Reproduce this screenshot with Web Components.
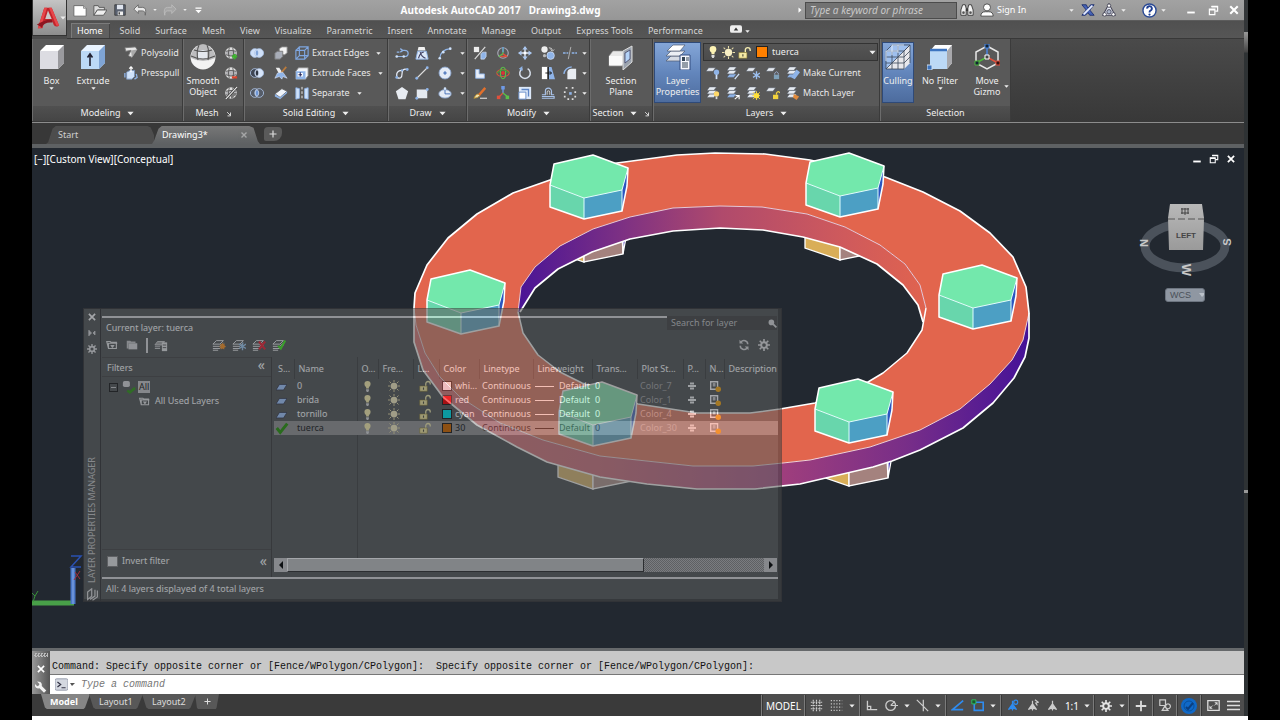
<!DOCTYPE html>
<html lang="en">
<head>
<meta charset="utf-8">
<title>Autodesk AutoCAD 2017 - Drawing3.dwg</title>
<style>
  html { background: #000; }
  body { margin: 0; font: 9px/12px "Noto Sans", "Open Sans", sans-serif; color: #e8e8e8; }
</style>
</head>
<body>
<cad-app></cad-app>
<script>
const define = (name, html, setup) => customElements.define(name, class extends HTMLElement {
  connectedCallback() {
    if (this.shadowRoot) return;
    const t = document.createElement('template');
    t.innerHTML = typeof html === 'function' ? html(this) : html;
    this.attachShadow({ mode: 'open' }).append(t.content.cloneNode(true));
    if (setup) setup(this);
  }
});

/* ---------- icon set ---------- */
const B = '#8fb4e8', L = '#cfe2fa', W = '#f2f2f2', G = '#d0d0d0';
const sheet = (x, y, c = '#e6ebf2') => `<path d="M${x + 3} ${y}h8l-3 4h-8z" fill="${c}" stroke="#4c5560" stroke-width=".6"/>`;
const stack = (c2 = '#e6ebf2') => sheet(1, 9, c2) + sheet(1, 5) + sheet(1, 1);
const ball = `<circle cx="8" cy="8" r="6.600" fill="#e2e2e2"/><path d="M2 6q6-2 12 0v4q-6 3-12 0z" fill="#b4b4b8"/><path d="M2 6q6-2 12 0M2 10q6 3 12 0M6 2q-2 6 0 12M10 2q2 6 0 12" fill="none" stroke="#555" stroke-width="1"/>`;
const folder = `<path d="M2 4h4l1 1h6v7H4zM4 12V6h10" fill="none" stroke="#e8e8e8" stroke-width="1.300"/>`;
const rings = (a, b, mid) => `<circle cx="5.500" cy="8" r="5" fill="${a}" stroke="#a9bfe0"/><circle cx="10.500" cy="8" r="5" fill="${b}" stroke="#a9bfe0"/><path d="M8 4a5 5 0 0 1 0 8a5 5 0 0 1 0-8z" fill="${mid}" stroke="#dce8fa" stroke-width=".8"/>`;
const person = c => `<path d="M8 2v4l5 7-4-2-1 2-1-2-4 2 5-7z" fill="${c}" stroke="${c}" stroke-width="1.500"/>`;
const lstack = `<path d="M5 3h8l-4 4H1zM1 9.500h8l4-4M1 12h8l4-4M1 14h6" fill="none" stroke="#eee" stroke-width="1.100"/>`;
const ICONS = {
  caret: `<path d="M1 4h14l-7 8z" fill="#eee"/>`,
  tri: `<path d="M4 1l8 7-8 7z" fill="#fff"/>`,
  new: `<path d="M1 3h11l3 3v9H1z" fill="#fff" stroke="#666"/><path d="M12 3v3h3" fill="#ccc" stroke="#888"/>`,
  open: `<path d="M1 14V3h5l1 2h6v3H5z" fill="#ddd" stroke="#555"/><path d="M5 8h11l-4 6H1z" fill="#eee" stroke="#555"/>`,
  save: `<path d="M1 1h14v14H1z" fill="#5b6270" stroke="#333"/><path d="M4 1h8v6H4z" fill="#dfe4ee"/><path d="M5 10h7v5H5z" fill="#eee"/><path d="M6 11h2v3H6z" fill="#444"/>`,
  undo: `<path d="M6 2L1 7l5 5V9h5q3 0 3 5 2-9-3-9H6z" fill="#e8e8e8" stroke="#666"/>`,
  redo: `<path d="M10 2l5 5-5 5V9H5q-3 0-3 5-2-9 3-9h5z" fill="#a6a6a6" stroke="#bbb"/>`,
  qmenu: `<path d="M1 1h14v3H1zM1 7h14l-7 7z" fill="#fff"/>`,
  binoc: `<path d="M3 2h3l1 4v8H1V8zM13 2h-3L9 6v8h6V8z" fill="#f4f4f4" stroke="#333"/><path d="M7 6h2v3H7z" fill="#333"/><circle cx="4" cy="11" r="1.500" fill="#555"/><circle cx="12" cy="11" r="1.500" fill="#555"/>`,
  user: `<circle cx="8" cy="5" r="4" fill="#fff" stroke="#444"/><path d="M1 15q0-5 5-5h4q5 0 5 5z" fill="#fff" stroke="#444"/>`,
  exchange: `<path d="M1 2h5l2 4 3-4h4l-5 6 5 6h-5l-2-3-3 3H1l5-6z" fill="#4663b8" stroke="#1e2f6c"/><path d="M3 13l10-10" stroke="#e8eeff" stroke-width="2"/>`,
  a360: `<path d="M8 1l7 13H1z" fill="#e8ecf8" stroke="#445" stroke-width="1.200"/><circle cx="8" cy="10" r="2.500" fill="#a9b3c8" stroke="#445"/><circle cx="8" cy="3" r="2" fill="#fff" stroke="#445"/><circle cx="3" cy="13" r="2" fill="#fff" stroke="#445"/><circle cx="13" cy="13" r="2" fill="#fff" stroke="#445"/>`,
  help: `<circle cx="8" cy="8" r="7" fill="#fff" stroke="#2b4a94" stroke-width="1.500"/><path d="M5.500 6a2.500 2.500 0 1 1 3.500 2.200q-1 .5-1 1.800" fill="none" stroke="#1f3f94" stroke-width="2"/><circle cx="8" cy="12.300" r="1.200" fill="#1f3f94"/>`,
  min: `<path d="M2 12h12" stroke="#fff" stroke-width="3"/>`,
  restore: `<path d="M5 2h9v7h-3M2 6h8v8H2z" fill="none" stroke="#fff" stroke-width="1.700"/><path d="M5 2.500h9M2 7h8" stroke="#fff" stroke-width="2.200"/>`,
  close: `<path d="M3 3l10 10M13 3L3 13" stroke="#fff" stroke-width="2.800"/>`,
  polysolid: `<path d="M1 2l12-1 2 3-6 9-4-2 3-6-6 1z" fill="#e6e6e6" stroke="#777"/><path d="M8 5l7-1-6 9z" fill="#a8a8a8"/>`,
  presspull: `<path d="M3 7l4-2h5v7l-3 3H3z" fill="${L}" stroke="#7793bd"/><path d="M8 1v6M6 3l2-2 2 2" stroke="#fff" stroke-width="1.500" fill="none"/><path d="M1 8v5M14 9l1 4-3 2" stroke="${B}" fill="none" stroke-width="1.500"/>`,
  meshmore: ball + `<path d="M12 9v6M9 12h6" stroke="#3cb52e" stroke-width="2.500"/>`,
  meshless: ball + `<path d="M9 13h6" stroke="#e0442c" stroke-width="2.500"/>`,
  meshcrease: ball + `<path d="M8 8h7L8 15z" fill="#777"/><path d="M2 15L15 1" stroke="#333" stroke-width="2.600"/><path d="M2 15L15 1" stroke="#eee" stroke-width="1.300"/>`,
  union: rings('#cfe0f8', '#cfe0f8', '#7fa3d8'),
  subtract: rings('#3f4654', '#d7e5fa', '#2d3442'),
  intersect: rings('#555c68', '#555c68', '#6c95d6'),
  box2: `<path d="M6 3l3-2h6v7l-3 2H6z" fill="#f4f4f4" stroke="#888"/><path d="M1 8l3-2h6v6l-3 3H1z" fill="#a8adb8" stroke="#777"/>`,
  broom: `<path d="M2 2h4l4 6-3 3z" fill="#eee"/><path d="M14 1L8 8" stroke="#b97a3c" stroke-width="2"/><path d="M4 8l6-1 5 7-5-2-1 3-3-3-5 2z" fill="${B}" stroke="#e8f0ff" stroke-width=".6"/>`,
  shell: `<path d="M1 9l8-6 6 3-8 7z" fill="#f0f4fa" stroke="#666"/><path d="M1 9v3l6 3v-2zM7 15l8-7V6l-8 7z" fill="${B}"/>`,
  cage: `<path d="M1 5h10v10H1zM5 1h10v10H5zM1 5l4-4M11 5l4-4M11 15l4-4M1 15l4-4" fill="none" stroke="#7ea6e0" stroke-width="1.300"/>`,
  extface: `<path d="M1 6l3-4h11v9l-3 4H1z" fill="#f2f5fa" stroke="#888"/><path d="M1 6h11v9H1z" fill="${B}"/><path d="M3 8h6v4H3z" fill="#fff"/><path d="M6 7v5M4 10h4" stroke="#225" stroke-width="1.200"/>`,
  separate: `<path d="M1 2l4 1v11l-4 1zM15 2l-4 1v11l4 1z" fill="${L}" stroke="${B}"/><path d="M8 1v14" stroke="#fff" stroke-dasharray="3 2"/>`,
  pline: `<path d="M2 12h9q4 0 4-3.500T11 5H7M2 7h3M6 3l3 2-3 2" fill="none" stroke="${B}" stroke-width="1.400"/><circle cx="2" cy="12" r="1.500" fill="${L}"/><circle cx="10" cy="12" r="1.500" fill="${L}"/>`,
  loft: `<path d="M4 1h7l1 4H3z" fill="#f2f2f2"/><path d="M3 6h10l2 9H1z" fill="#dce8f8" stroke="${B}"/><path d="M4 14q2-7 6-7M6 7q1 5 6 7" fill="none" stroke="#446" stroke-width="1.300"/>`,
  arc: `<path d="M2 14Q3 4 14 3" fill="none" stroke="${B}" stroke-width="1.400"/><circle cx="2" cy="14" r="1.500" fill="${L}"/><circle cx="6" cy="7" r="1.500" fill="${L}"/><circle cx="14" cy="3" r="1.500" fill="${L}"/>`,
  spline: `<path d="M2 13q6 3 6-4t6-5M2 13V9q1-4 6-4" fill="none" stroke="#e8eefa" stroke-width="1.400"/><circle cx="2" cy="13" r="1.600" fill="${B}"/><circle cx="14" cy="4" r="1.600" fill="${B}"/><circle cx="8" cy="5" r="1.300" fill="${B}"/>`,
  line: `<path d="M2 14L14 2" stroke="#ddd" stroke-width="1.300"/><circle cx="2" cy="14" r="1.600" fill="${B}"/><circle cx="14" cy="2" r="1.600" fill="${B}"/>`,
  circle: `<circle cx="8" cy="8" r="6.800" fill="#e4ebf6" stroke="#8ea9d4"/><path d="M8 6v4M6 8h4" stroke="#3a67b5" stroke-width="1.300"/>`,
  polygon: `<path d="M8 1l7 5-3 9H4L1 6z" fill="#e8ecf2"/>`,
  rect: `<path d="M2 4h12v10H2z" fill="#e4e9f0"/><circle cx="2" cy="14" r="1.600" fill="${B}"/><circle cx="14" cy="4" r="1.600" fill="${B}"/>`,
  ellipse: `<ellipse cx="8" cy="9" rx="7" ry="4.800" fill="#e4ebf6" stroke="#8ea9d4"/><path d="M8 3v6h6" stroke="#3a67b5" fill="none"/><circle cx="8" cy="3" r="1.500" fill="${L}"/>`,
  smesh: `<path d="M1 1h6v6H1z" fill="#eee"/><path d="M2 15L14 1" stroke="#ddd" stroke-width="1.300"/><path d="M9 9l2-2h4v5l-2 3H9z" fill="${B}" stroke="#dce8fa" stroke-width=".7"/>`,
  gizrot: `<circle cx="8" cy="8" r="6" fill="none" stroke="#a8a8b8" stroke-width="1.300"/><path d="M8 2v7l-5 3" fill="none" stroke="#5ac04a" stroke-width="1.500"/><path d="M8 9l5 3M5 12h7" stroke="#e0503c" stroke-width="1.500"/><path d="M8 1v6" stroke="#6f9ae6" stroke-width="1.500"/>`,
  move: `<path d="M8 1v14M1 8h14" stroke="#dce6f6" stroke-width="1.600"/><path d="M8 0l3 4H5zM8 16l3-4H5zM0 8l4-3v6zM16 8l-4-3v6z" fill="#a9c6f0"/><path d="M6.500 6.500h3v3h-3z" fill="#fff"/>`,
  copy: `<circle cx="4" cy="4" r="3.600" fill="#eee"/><circle cx="11" cy="11" r="4.300" fill="${B}" stroke="#dce8fa" stroke-width=".7"/><path d="M9 2q4 0 4 3M11 4l2 2 2-2" fill="none" stroke="#ddd"/><circle cx="4" cy="11" r="1.800" fill="#bbb"/>`,
  trim: `<path d="M0 8h6M10 8h6" stroke="${B}" stroke-width="1.800" stroke-dasharray="3 1"/><path d="M9 1L6 15" stroke="#bbb"/>`,
  lbox: `<path d="M3 4h4v5h6v5H3z" fill="#e8eef8" stroke="${B}"/>`,
  giz3: `<ellipse cx="8" cy="8" rx="7" ry="4" fill="none" stroke="#e0503c" stroke-width="1.400"/><ellipse cx="8" cy="8" rx="3" ry="6.500" fill="none" stroke="#5ac04a" stroke-width="1.200"/><path d="M1 8q7-7 14 0" fill="none" stroke="#4a9a3c" stroke-width="1.500"/><circle cx="8" cy="8" r="2.200" fill="#d33"/>`,
  rotate: `<path d="M5 3a6 6 0 1 0 6 0" fill="none" stroke="#d8e0ec" stroke-width="1.700"/><path d="M5 0v6L1 3z" fill="${B}"/>`,
  mirror: `<path d="M1 1h7v14H1z" fill="#fff"/><path d="M9 1h3l4 14H9z" fill="${B}"/><path d="M8 1v14" stroke="#111" stroke-width="1.500"/><path d="M5 8h7M10 6l2 2-2 2" fill="none" stroke="#111"/>`,
  fillet: `<path d="M5 7q0-3 4-4h6v12H5z" fill="#e8ecf2"/><path d="M1 9q1-7 9-8" fill="none" stroke="${B}" stroke-width="1.700"/>`,
  erase: `<path d="M1 14q2-5 5-5l2 2q-3 3-7 3z" fill="#f2e2b0" stroke="#b58b2a"/><path d="M6 9l7-8 2 2-7 8z" fill="#e2702c"/><path d="M8 14h8" stroke="#ddd" stroke-width="1.300"/>`,
  align3: `<path d="M8 1v7" stroke="#6f9ae6" stroke-width="1.500"/><path d="M8 8l-5 5" stroke="#e0503c" stroke-width="1.500"/><path d="M8 8l5 4" stroke="#5ac04a" stroke-width="1.500"/><path d="M6 0h4v4H6z" fill="#6f9ae6"/><path d="M1 11h4v4H1z" fill="#e0503c"/><path d="M11 11h4v4h-4z" fill="#5ac04a"/>`,
  scale: `<path d="M1 1h14v14H1z" fill="#dce8f8"/><path d="M1 7h8v8H1z" fill="#fff" stroke="#5e86c6"/><path d="M4 4h8v8" fill="none" stroke="#5e86c6" stroke-width="1.500"/>`,
  offset: `<path d="M1 10h4V6a3.500 3.500 0 0 1 7 0v4h3M1 14h14v-2H1" fill="none" stroke="#a9c3ea" stroke-width="1.300"/><path d="M7 10V7a1.500 1.500 0 0 1 3 0v3" fill="none" stroke="#ddd"/>`,
  array: `<g fill="#ddd"><path d="M3 1h2v2H3zM10 1h2v2h-2zM1 6h2v2H1zM13 6h2v2h-2zM13 11h2v2h-2zM1 11h2v2H1zM5 14h2v2H5zM10 14h2v2h-2z"/></g><path d="M7 7h3v3H7z" fill="#8fb4e8"/>`,
  bulb: `<path d="M8 0a4.500 4.500 0 0 1 4.500 4.500q0 2.500-2.500 4.500v2H6V9Q3.500 7 3.500 4.500A4.500 4.500 0 0 1 8 0z" fill="#fdf3b4"/><path d="M6 12h4v2l-1 2H7l-1-2z" fill="#ddd"/>`,
  sun: `<circle cx="8" cy="8" r="4.500" fill="#f8efc4"/><path d="M8 0v3M8 13v3M0 8h3M13 8h3M2 2l2 2M12 12l2 2M14 2l-2 2M4 12l-2 2" stroke="#e8dda8" stroke-width="1.300"/>`,
  lock: `<path d="M9 8V5a3 3 0 0 1 6 0v1" fill="none" stroke="#f4ecb0" stroke-width="1.700"/><path d="M1 8h10v7H1z" fill="#f4e8a4" stroke="#8a7a2c" stroke-width=".7"/><path d="M6 10v3" stroke="#554" stroke-width="1.500"/>`,
  lyoff: sheet(0, 2) + `<path d="M12 6v9" stroke="#cfe2fa" stroke-width="2"/><circle cx="12" cy="7" r="3" fill="#8fb4e8"/>`,
  lyiso: stack('#8fb4e8') + `<path d="M15 9l-5 6" stroke="#cfe2fa" stroke-width="1.500"/>`,
  lyfrz: sheet(0, 2) + `<path d="M12 6v9M8 8l8 5M16 8l-8 5" stroke="#9cc0f0" stroke-width="1.500"/>`,
  lylock: sheet(0, 2) + `<path d="M9 10h6v5H9z" fill="#7ea0b8"/><path d="M10 10V8q2-3 4 0v2" fill="none" stroke="#9ac"/>`,
  lymake: stack('#8fb4e8') + `<path d="M12 4l4 3-6 8-4-2" fill="#8fb4e8"/>`,
  lyon: stack() + `<circle cx="12" cy="9" r="3" fill="#ffd96a"/><path d="M12 12v3" stroke="#ddd" stroke-width="2"/>`,
  lyuniso: stack('#8fb4e8') + `<path d="M10 15l5-4M15 15v-4h-4" stroke="#fff" fill="none" stroke-width="1.300"/>`,
  lythaw: stack() + `<circle cx="12" cy="11" r="3" fill="#ffe03c"/><path d="M12 6v10M7 11h10M8 7l8 8M16 7l-8 8" stroke="#ffe03c"/>`,
  lyunlock: sheet(0, 2) + `<path d="M8 10h6v5H8z" fill="#f2d23c"/><path d="M12 10V8q2-3 4 0" fill="none" stroke="#f2d23c" stroke-width="1.500"/>`,
  lymatch: stack() + `<path d="M9 9l6 3-3 4-4-3z" fill="#e08a3c"/>`,
  dlg: `<path d="M3 3l8 8M12 4v9H4" fill="none" stroke="#ddd" stroke-width="2.500"/>`,
  ribmin: `<rect x="0" y="3" width="16" height="10" rx="2.500" fill="#eee"/><path d="M5 10l3-4 3 4z" fill="#333"/>`,
  plus: `<path d="M8 1v14M1 8h14" stroke="#ddd" stroke-width="2.400"/>`,
  wrench: `<path d="M3 1l3 3-1 2-2 1-3-3q-1 5 4 6l2-.5 6 6 3-3-6-6q1-6-6-6z" fill="#f2f2f2"/>`,
  prompt: `<rect x="0" y="1" width="16" height="14" rx="2" fill="#d4d8e0" stroke="#888ea0"/><path d="M3 5l4 3-4 3M8 12h5" fill="none" stroke="#334" stroke-width="1.500"/>`,
  wclose: `<path d="M3 3l10 10M13 3L3 13" stroke="#fff" stroke-width="2.600"/>`,
  pin: `<path d="M2 2v12M2 3l5 5-5 5zM14 4l-4 4 4 4z" fill="#ddd" stroke="#ddd" stroke-width="1.500"/>`,
  gear: `<circle cx="8" cy="8" r="3.800" fill="none" stroke="#e4e4e4" stroke-width="2.600"/><path d="M8 0v4M8 12v4M0 8h4M12 8h4M2.300 2.300l3 3M10.700 10.700l3 3M13.700 2.300l-3 3M5.300 10.700l-3 3" stroke="#e4e4e4" stroke-width="2.200"/>`,
  fold1: folder + `<path d="M6 8h5l-2 3H8z" fill="#e8e8e8"/>`,
  fold2: `<path d="M2 3h4l1 1h5v2H4v6H2z" fill="#ccc"/><path d="M4 6h10v7H4z" fill="#ddd"/>`,
  lstate: `<path d="M4 4h8l-3 4H1zM1 10h6M1 12h6" fill="#aaa" stroke="#ddd"/><path d="M9 5h6v10H9z" fill="#e8e8e8"/><path d="M10 8h4M10 11h4" stroke="#555"/>`,
  lnew: lstack + `<path d="M12 5l1 2 2-1-1 2 2 2-2 1 0 2-2-1-2 1 0-2-2-1 2-1-1-2 2 0z" fill="#ff9a2a"/>`,
  lfrz: lstack + `<path d="M12 5v9M8 7l8 5M16 7l-8 5" stroke="#a4cdf2" stroke-width="1.600"/>`,
  ldel: lstack + `<path d="M8 4l7 9M15 4l-7 9" stroke="#f02a3a" stroke-width="2.400"/>`,
  lcur: lstack + `<path d="M7 9l3 3 5-9" fill="none" stroke="#4cf02a" stroke-width="2.400"/>`,
  refresh: `<path d="M13 7a5 5 0 0 0-9-3M3 9a5 5 0 0 0 9 3" fill="none" stroke="#ddd" stroke-width="2"/><path d="M2 1v5h5zM14 15v-5H9z" fill="#ddd"/>`,
  search: `<circle cx="6" cy="6" r="5" fill="#ddd"/><path d="M9 9l6 6" stroke="#ddd" stroke-width="3"/>`,
  lay: `<path d="M5 5h11l-5 8H0z" fill="#a8ccff" stroke="#334"/>`,
  check: `<path d="M2 8l4 5 8-10" fill="none" stroke="#2f9a10" stroke-width="3.400"/>`,
  print: `<path d="M4 1h8v4H4zM0 6h16v4H0zM4 11h8v4H4z" fill="#f4f4f4"/>`,
  vp: `<path d="M1 1h10v11H1z" fill="none" stroke="#fff" stroke-width="2"/><path d="M4 3h4v5H4z" fill="#ccc"/><circle cx="12" cy="12" r="4" fill="#ffb01c"/>`,
  allf: `<rect x="1" y="1" width="8" height="7" rx="2" fill="#ddd"/><path d="M6 12l3 2 6-5" fill="none" stroke="#3a9a20" stroke-width="3"/>`,
  pal: `<path d="M2 5l5-4v9l-5 4zM5 14l6-4V2M8 15l6-4V3" fill="none" stroke="#ddd" stroke-width="1.500"/>`,
  grid: `<path d="M1 4h14M1 8h14M1 12h14M4 1v14M8 1v14M12 1v14" stroke="#ccc" stroke-width="1.400" stroke-dasharray="2 1"/>`,
  snap: `<path d="M1 2h14M1 6h14M1 10h14M1 14h14" stroke="#ccc" stroke-width="1.400" stroke-dasharray="1.400 2"/>`,
  ortho: `<path d="M3 2v11h12M3 9h4v4" fill="none" stroke="#ccc" stroke-width="1.600"/>`,
  polar: `<circle cx="7" cy="8" r="6" fill="none" stroke="#ccc" stroke-width="1.600"/><path d="M7 8h9M7 8l5-5" stroke="#ccc" stroke-width="1.400"/>`,
  iso: `<path d="M1 1l14 14M9 1v7M9 8v7" stroke="#ccc" stroke-width="1.500"/>`,
  otrack: `<path d="M15 2L2 13h13" fill="none" stroke="#2f8cf0" stroke-width="2"/>`,
  osnap: `<path d="M4 4h11v10H4z" fill="none" stroke="#2f8cf0" stroke-width="2"/><path d="M1 1h5v5H1z" fill="#1a5a2a" stroke="#3c6"/>`,
  ann1: person('#2f8cf0') + `<circle cx="12" cy="4" r="2.500" fill="none" stroke="#2f8cf0" stroke-width="1.500"/>`,
  ann2: person('#ccc') + `<path d="M11 1l4 3-3 1 2 3" fill="none" stroke="#ccc" stroke-width="1.500"/>`,
  ann3: person('#ccc'),
  units: `<path d="M1 1h7v7H1zM11 6a3 3 0 1 0 .1 0M4 14l3-5 4 5z" fill="none" stroke="#ccc" stroke-width="1.500"/>`,
  hw: `<circle cx="8" cy="8" r="8" fill="#1069c8"/><circle cx="8" cy="8" r="5" fill="none" stroke="#0b4f98"/><path d="M5 9l2 2 5-6" fill="none" stroke="#0b3f80" stroke-width="2"/>`,
  full: `<path d="M1 2h14v12H1z" fill="none" stroke="#ddd" stroke-width="1.600"/><path d="M9 4h4v4zM3 8v4h4z" fill="#ddd"/><path d="M12 5l-3 3M4 11l3-3" stroke="#ddd"/>`,
  burger: `<path d="M0 3h16M0 8h16M0 13h16" stroke="#ddd" stroke-width="1.800"/>`,
  /* large ribbon icons on a 26 unit grid */
  Box: `<path d="M1 7l6-6h18v18l-6 6H1z" fill="#fff"/><path d="M19 7l6-6v18l-6 6z" fill="#9a9a9e"/><path d="M1 7h18v18H1z" fill="#dcdce2"/>`,
  Extrude: `<path d="M1 7l6-6h18v18l-6 6H1z" fill="#eaf4ff"/><path d="M19 7l6-6v18l-6 6z" fill="#7fa4d4"/><path d="M1 7h18v18H1z" fill="#bcd9f6"/><path d="M10 22V11M7.500 13.500L10 10l2.500 3.500" stroke="#223" stroke-width="1.600" fill="none"/>`,
  Smooth: `<circle cx="13" cy="13" r="12.500" fill="#f2f2f2"/><path d="M1 14q12 6 24 0v-3Q22 1 13 .5 4 1 1 11z" fill="#bcbcbe"/><path d="M8 6h9v9H8z" fill="#e4e8ee"/><path d="M1 12q12 6 24 0M4 6q9 3 18 0M9 1Q6 8 8 16M17 1q3 7 1 15" fill="none" stroke="#555" stroke-width="1.100"/>`,
  Section: `<path d="M1 12l4-5h13v9l-4 6H1z" fill="#e8e8e8" stroke="#999" stroke-width=".6"/><path d="M1 12h13v9H1z" fill="#fafafa"/><path d="M15 7l9-5v16l-9 8z" fill="#9ba3ae" stroke="#ddd"/><path d="M17 9l5-3v9l-5 4z" fill="#b4d3f8" stroke="#446" stroke-width=".8"/>`,
  LayerProp: `<g stroke="#4d5a70" stroke-width=".7"><path d="M6 12h14l-5 5H1z" fill="#d6dbe4"/><path d="M6 7h14l-5 5H1z" fill="#eceff4"/><path d="M8 1h12l-5 6H2z" fill="#fff"/></g><path d="M15 11h10v15H15z" fill="#f6f8fc" stroke="#334c80"/><path d="M17 13h3v4h-3z" fill="#345"/><path d="M21 14h3M21 16h3M17 19h6M17 21h6M17 23h6" stroke="#345"/>`,
  Culling: `<path d="M7 1h18v18L19 25H1V7z" fill="#9fc0ee"/><path d="M1 25L25 1v18l-6 6z" fill="#e8e8ec"/><path d="M1 7h18v18H1zM7 1h18v18M1 7l6-6M19 7l6-6M1 13h18l6-6M1 19h18l6-6M7 7v18M13 7v18M13 1v6M1 25L25 1" fill="none" stroke="#3b4658" stroke-width=".8"/><path d="M1 7h12M1 7v10M7 1h12M7 1v10M13 1v8" stroke="#e4f0ff" stroke-width=".9"/>`,
  NoFilter: `<path d="M3 7l5-6h17v18l-5 6H3z" fill="#fff"/><path d="M20 7l5-6v18l-5 6z" fill="#a8a8ac"/><path d="M3 7h17v18H3z" fill="#bcd9f6"/><path d="M3 6h17" stroke="#3c74c0" stroke-width="2.500"/><path d="M0 21h5v5H0z" fill="#3c74c0" stroke="#cde"/>`,
  Gizmo: `<path d="M13 2l11 6v11l-11 6-11-6V8z" fill="none" stroke="#e8e8e8" stroke-width="1.500"/><path d="M13 3v10" stroke="#4a86e0" stroke-width="1.500"/><path d="M13 13l-9 5" stroke="#4cb83c" stroke-width="1.500"/><path d="M13 13l9 5" stroke="#e0503c" stroke-width="1.500"/><path d="M11 0h4v4h-4z" fill="#123" stroke="#4a86e0"/><path d="M1 17h4v4H1z" fill="#123" stroke="#4cb83c"/><path d="M22 17h4v4h-4z" fill="#311" stroke="#e0503c"/><path d="M11 11h4v4h-4z" fill="#444" stroke="#fff"/>`,
  Logo: `<path d="M2 24L9 2h8l8 19q-4 3-6-1l-1-3H9l-2 7z" fill="#c2242b"/><path d="M13 5l4 9h-7z" fill="#c9c9c9"/><path d="M9 2h3L5 24H2zM14 2h3l8 19q-2 1-3 0z" fill="#e6464a"/><path d="M1 20q10-6 16-5l1 3Q9 17 6 23z" fill="#8e1620"/>`
};
define('cad-icon', el => {
  const n = el.getAttribute('name'), big = /^[A-Z]/.test(n), s = el.getAttribute('size') || (big ? 26 : 14);
  return `<style>:host{display:block;flex:none;width:${s}px;height:${s}px}svg{display:block;width:100%;height:100%}</style>
  <svg viewBox="0 0 ${big ? '26 26' : '16 16'}" aria-hidden="true">${ICONS[n] || ''}</svg>`;
});

/* ---------- plain icon button ---------- */
define('icon-button', el => `<style>
  :host{display:block;flex:none;width:20px}
  button{all:unset;box-sizing:border-box;width:100%;height:100%;display:flex;align-items:center;justify-content:center;gap:2px}
  </style><button aria-label="${el.getAttribute('label') || el.getAttribute('icon')}"><cad-icon name="${el.getAttribute('icon')}" size="${el.getAttribute('size') || 14}"></cad-icon><slot></slot></button>`);

/* ---------- ribbon row button: icon, label, optional caret ---------- */
define('row-button', el => `<style>
  :host{display:block;height:20px}
  button{all:unset;display:flex;align-items:center;gap:3px;height:20px;white-space:nowrap}
  .c{margin-left:4px}
  </style><button><cad-icon name="${el.getAttribute('icon')}" size="14"></cad-icon><slot></slot>${el.hasAttribute('caret') ? '<cad-icon class="c" name="caret" size="5"></cad-icon>' : ''}</button>`);

/* ---------- ribbon tall button ---------- */
define('big-button', el => `<style>
  :host{display:block;flex:none;width:42px}
  button{all:unset;box-sizing:border-box;width:100%;height:61px;padding-top:2px;display:flex;flex-direction:column;align-items:center;text-align:center;line-height:11px;color:#eee}
  :host([active]) button{background:linear-gradient(#84a6d8,#6386bc 50%,#4d6c9e);border:1px solid #2f4a78;padding-top:1px}
  .t{margin-top:5px;white-space:pre-line}
  </style><button><cad-icon name="${el.getAttribute('icon')}" size="26"></cad-icon><span class="t"><slot></slot></span>${el.hasAttribute('caret') ? '<cad-icon name="caret" size="5"></cad-icon>' : ''}</button>`);

/* ---------- ribbon panel ---------- */
define('ribbon-panel', el => `<style>
  :host{display:flex;flex:none;box-sizing:border-box;flex-direction:column;height:82px;border-right:1px solid #3b3b3b;border-left:1px solid #6c6c6c;background:#595959}
  .b{flex:1;display:flex;padding-top:3px}
  .f{flex:none;height:15px;display:flex;align-items:center;justify-content:center;gap:7px;background:linear-gradient(#505050,#454545);color:#eee}
  .f span{line-height:12px;padding-bottom:1px}
  </style><div class="b"><slot></slot></div><div class="f"><span>${el.getAttribute('label')}</span>${el.hasAttribute('caret') ? '<cad-icon name="caret" size="7"></cad-icon>' : ''}${el.hasAttribute('dialog') ? '<cad-icon name="dlg" size="6"></cad-icon>' : ''}</div>`);

/* ---------- icon matrix of a ribbon panel ---------- */
define('icon-grid', el => {
  const rows = el.getAttribute('icons').split('/').map(r => r.trim().split(' '));
  return `<style>:host{display:grid;flex:none;grid-template-columns:${el.getAttribute('cols')};grid-auto-rows:20px;padding-top:1px}
  icon-button{width:auto}</style>` +
    rows.flat().map(i => `<icon-button icon="${i}" size="${i === 'caret' ? 5 : 14}"></icon-button>`).join('');
});

/* ---------- title bar and ribbon tabs ---------- */
define('cad-header', `<style>
  :host{display:grid;grid-template-columns:35px 1fr;grid-template-rows:21px 18px;background:#4b4b4b}
  .logo{all:unset;grid-row:1/3;display:flex;align-items:center;margin-bottom:3px;padding-left:3px;background:linear-gradient(#c4c4c4,#8d8d8d);border:1px solid #333;border-top:0;z-index:1}
  .bar{display:flex;align-items:center;background:linear-gradient(#a2a2a2,#969696);border-bottom:1px solid #5c5c5c;height:20px;color:#fff}
  .qat{display:flex;align-items:center;padding-left:3px;flex:none}
  .title{flex:1;display:flex;justify-content:center;gap:8px;font-weight:700;font-size:10px;white-space:pre;padding-right:2px}
  input{box-sizing:border-box;width:152px;height:17px;margin-left:2px;background:#727272;border:1px solid #4c4c4c;padding:0 4px;font:italic 10px "Noto Sans",sans-serif;color:#fff}
  input::placeholder{color:#c9c9c9}
  .right{display:flex;align-items:center;flex:none}
  .sign{all:unset;width:69px}
  nav{display:flex;align-items:end;padding-left:4px;background:linear-gradient(#505050,#565656);border-bottom:1px solid #383838}
  nav button{all:unset;padding:0 8px 0 7px;height:15px;line-height:13px;color:#d6d6d6}
  nav .on{background:#606060;box-shadow:inset 1px 1px #7b7b7b,inset -1px 0 #444;color:#fff;padding:0 7px 0 6px;height:15px;margin-right:3px}
  .rm{width:12px;margin:0 0 3px 19px}
</style>
<button class="logo" aria-label="Application menu"><cad-icon name="Logo" size="24"></cad-icon><cad-icon name="caret" size="6"></cad-icon></button>
<div class="bar">
  <div class="qat"><icon-button icon="new"></icon-button><icon-button icon="open"></icon-button><icon-button icon="save" size="12"></icon-button><icon-button icon="undo"></icon-button><icon-button icon="caret" size="4" style="width:10px"></icon-button><icon-button icon="redo"></icon-button><icon-button icon="caret" size="4" style="width:10px"></icon-button><icon-button icon="qmenu" size="7" style="width:16px"></icon-button></div>
  <div class="title"><span>Autodesk AutoCAD 2017</span><span>Drawing3.dwg</span></div>
  <div class="right"><cad-icon name="tri" size="6"></cad-icon><input aria-label="Search help" placeholder="Type a keyword or phrase">
  <icon-button icon="binoc"></icon-button><icon-button icon="user"></icon-button><button class="sign">Sign In</button><icon-button icon="caret" size="5" style="width:10px"></icon-button><icon-button icon="exchange" style="width:24px"></icon-button><icon-button icon="a360" style="width:18px"></icon-button><icon-button icon="caret" size="5" style="width:10px"></icon-button><icon-button icon="help" size="15" style="width:42px"></icon-button><icon-button icon="caret" size="5" style="width:10px;margin-left:-12px"></icon-button><icon-button icon="min" size="10" style="width:22px;margin-left:12px"></icon-button><icon-button icon="restore" size="11" style="width:22px"></icon-button><icon-button icon="close" size="12" style="width:20px"></icon-button></div>
</div>
<nav>${['Home', 'Solid', 'Surface', 'Mesh', 'View', 'Visualize', 'Parametric', 'Insert', 'Annotate', 'Manage', 'Output', 'Express Tools', 'Performance'].map((t, i) => `<button${i ? '' : ' class="on"'}>${t}</button>`).join('')}<icon-button class="rm" icon="ribmin" size="12"></icon-button><icon-button icon="caret" size="5" style="width:12px;height:14px"></icon-button></nav>`);

/* ---------- ribbon ---------- */
define('cad-ribbon', `<style>
  :host{display:flex;height:84px;box-sizing:border-box;background:linear-gradient(#4a4a4a,#383838);border-bottom:1px solid #8c8c8c}
  .col{display:grid;grid-auto-rows:20px;flex:none;align-content:start;padding-top:1px}
  .combo{grid-column:1/-1;display:flex;align-items:center;gap:3px;height:18px;box-sizing:border-box;border:1px solid #333;background:linear-gradient(#555,#4b4b4b);padding:0 1px 0 3px;margin-top:1px}
  .sw{width:10px;height:10px;background:#ff8000;border:1px solid #222;margin:0 1px 0 2px}
  select{appearance:none;flex:1;border:0;background:none;color:#eee;font:inherit;padding:0}
  .tools{display:grid;grid-template-columns:83px 1fr;grid-template-rows:20px 41px;width:175px;margin-left:2px}
  .gap{width:3px}
</style>
<ribbon-panel label="Modeling" caret style="width:151px"><big-button icon="Box" caret style="width:37px">Box</big-button><big-button icon="Extrude" caret style="width:46px">Extrude</big-button><div class="col" style="margin-left:8px"><row-button icon="polysolid">Polysolid</row-button><row-button icon="presspull">Presspull</row-button></div></ribbon-panel>
<ribbon-panel label="Mesh" dialog style="width:61px"><big-button icon="Smooth" style="width:38px">Smooth Object</big-button><icon-grid cols="18px" icons="meshmore/meshless/meshcrease"></icon-grid></ribbon-panel>
<ribbon-panel label="Solid Editing" caret style="width:144px"><icon-grid cols="24px 24px" icons="union box2/subtract broom/intersect shell"></icon-grid><div class="col" style="margin-left:2px"><row-button icon="cage" caret>Extract Edges</row-button><row-button icon="extface" caret>Extrude Faces</row-button><row-button icon="separate" caret>Separate</row-button></div></ribbon-panel>
<ribbon-panel label="Draw" caret style="width:79px"><div class="gap"></div><icon-grid cols="20px 20px 26px 8px" icons="pline loft arc caret/spline line circle caret/polygon rect ellipse caret"></icon-grid></ribbon-panel>
<ribbon-panel label="Modify" caret style="width:123px"><icon-grid cols="24px 22px 22px 24px 20px 8px" icons="smesh gizrot move copy trim caret/lbox giz3 rotate mirror fillet caret/erase align3 scale offset array caret"></icon-grid></ribbon-panel>
<ribbon-panel label="Section" caret dialog style="width:63px"><big-button icon="Section" style="width:60px">Section
Plane</big-button></ribbon-panel>
<ribbon-panel label="Layers" caret style="width:227px"><big-button icon="LayerProp" active style="width:47px">Layer Properties</big-button><div class="tools">
<div class="combo"><cad-icon name="bulb" size="12"></cad-icon><cad-icon name="sun" size="13"></cad-icon><cad-icon name="lock" size="13"></cad-icon><span class="sw"></span><select aria-label="Layer"><option>tuerca</option><option>tornillo</option><option>brida</option><option>0</option></select><cad-icon name="caret" size="7"></cad-icon></div>
<icon-grid cols="20px 20px 20px 20px" icons="lyoff lyiso lyfrz lylock/lyon lyuniso lythaw lyunlock"></icon-grid><div class="col"><row-button icon="lymake">Make Current</row-button><row-button icon="lymatch">Match Layer</row-button></div></div></ribbon-panel>
<ribbon-panel label="Selection" style="width:131px"><div style="width:1px"></div><big-button icon="Culling" active style="width:32px">Culling</big-button><big-button icon="NoFilter" caret style="width:52px">No Filter</big-button><big-button icon="Gizmo" style="width:42px">Move
Gizmo</big-button><cad-icon name="caret" size="5" style="margin:42px 0 0 -4px"></cad-icon></ribbon-panel>`);

/* ---------- drawing tabs ---------- */
define('file-tabs', `<style>
  :host{display:flex;align-items:end;height:21px;padding-left:14px;background:#383838;border-bottom:4px solid #5e6163}
  button{all:unset;box-sizing:border-box;height:18px;line-height:18px;color:#d0d0d0}
  .tab{width:108px;padding-left:12px;background:#4d4d4d;clip-path:polygon(0 100%,2% 90%,6% 15%,9% 0,94% 0,97% 8%,100% 50%,100% 100%)}
  .on{display:flex;align-items:center;background:linear-gradient(#777,#5e6163);color:#fff;padding:0 12px 0 10px;margin-left:-2px;clip-path:polygon(0 100%,2% 80%,6% 15%,9% 0,90% 0,94% 10%,98% 85%,100% 100%)}
  .on span{flex:1}
  .add{width:18px;height:14px;margin:0 0 3px 4px;background:#5a5a5a;border-radius:4px 4px 8px 2px;display:flex;justify-content:center;align-items:center}
</style>
<button class="tab">Start</button><button class="tab on"><span>Drawing3*</span><cad-icon name="close" size="8" style="opacity:.4"></cad-icon></button><button class="add" aria-label="New drawing"><cad-icon name="plus" size="8"></cad-icon></button>`);

/* ---------- 3D model viewport ---------- */
const at = (ox, oy, pts) => pts.map(([x, y]) => `${ox + x},${oy + y}`).join(' ');
const bolt = (x, y) => `<g stroke-linejoin="round">
  <polygon points="${at(x, y, [[-34, -13], [0, 0], [0, 21], [-34, 9]])}" fill="#68d6ac"/>
  <polygon points="${at(x, y, [[0, 0], [38, -8], [38, 13], [0, 21]])}" fill="#4c9fc4"/>
  <polygon points="${at(x, y, [[44, -30], [38, -8], [38, 13], [43, -12]])}" fill="#2b55c0"/>
  <polygon points="${at(x, y, [[-34, -13], [-30, -34], [9, -43], [44, -30], [38, -8], [0, 0]])}" fill="#73e8ac"/>
  <polyline points="${at(x, y, [[-34, -13], [0, 0], [38, -8], [44, -30]])}" fill="none" stroke="#dff" stroke-width="1"/>
  <path d="M${x} ${y}v21M${x + 38} ${y - 8}v21" stroke="#dff"/>
  <polygon points="${at(x, y, [[-34, -13], [-30, -34], [9, -43], [44, -30], [43, -12], [38, 13], [0, 21], [-34, 9]])}" fill="none" stroke="#fff" stroke-width="1.500"/></g>`;
const nut = (x, y) => `<g stroke="#fff" stroke-width="1.300">
  <polygon points="${at(x, y, [[-35, 36], [0, 42], [0, 64], [-35, 52]])}" fill="#d9ae58"/>
  <polygon points="${at(x, y, [[0, 42], [38, 36], [39, 56], [0, 64]])}" fill="#a4827e"/>
  <polygon points="${at(x, y, [[39, 36], [43, 34], [39, 56]])}" fill="#3b2bb0"/></g>`;
const outTop = '414,308 415,293 427,265 448,238 477,214 513,193 550,180 617,163 677,155 715,153 765,154 810,160 885,177 923,192 960,211 990,233 1013,257 1026,287 1029,313';
const outFront = '1029,313 1023,340 1012,360 990,384 960,409 920,430 870,447 847,452 810,460 783,463 753,466 693,466 600,456 543,440 500,423 460,397 440,377 425,353 416,325 414,308';
const outBase = '414,342 423,370 443,397 477,425 517,447 547,462 600,477 647,484 697,489 755,489 800,484 830,477 873,467 892,461 920,450 963,428 993,403 1014,378 1025,357 1029,338';
const holeBack = '518,312 521,287 535,267 560,246 593,229 630,217 673,208 720,206 762,207 807,214 845,227 880,245 905,264 920,285 926,308';
const holeFront = '926,308 922,330 907,353 883,373 868,382 815,403 780,409 750,413 697,413 638,404 582,383 560,372 538,355 523,333 518,312';
const holeBase = '923,322 918,305 903,285 877,264 840,247 803,237 763,230 720,228 673,231 630,239 592,252 558,269 535,288 520,312';
define('model-view', `<style>
  :host{display:block;flex:1;min-height:500px;position:relative;background:#222830;overflow:hidden;color:#fff}
  .scene{position:absolute;inset:0;width:100%;height:100%}
  .head{position:relative;display:flex;justify-content:space-between;padding:5px 5px 0 2px}
  .head div{display:flex}
  .vl{all:unset;font-size:10px}
  .wcs{all:unset;box-sizing:border-box;position:absolute;right:39px;top:140px;width:40px;height:14px;display:flex;align-items:center;gap:8px;padding-left:4px;border-radius:3px;background:#8f97a2;border:1px solid #6d7580;color:#4a5058;font:9px/12px "Liberation Sans",sans-serif}
  layer-palette{position:absolute;left:51px;top:160px}
  icon-button{width:17px}
</style>
<svg class="scene" viewBox="32 148 1212 500" preserveAspectRatio="xMidYMid slice" aria-hidden="true">
  <defs>
    <linearGradient id="o" gradientUnits="userSpaceOnUse" x1="414" y1="0" x2="1029" y2="0"><stop offset="0" stop-color="#da5f5f"/><stop offset=".3" stop-color="#c9566a"/><stop offset=".55" stop-color="#a8427a"/><stop offset=".8" stop-color="#782e88"/><stop offset="1" stop-color="#451298"/></linearGradient>
    <linearGradient id="i" gradientUnits="userSpaceOnUse" x1="518" y1="0" x2="926" y2="0"><stop offset="0" stop-color="#4a1496"/><stop offset=".25" stop-color="#7c3084"/><stop offset=".5" stop-color="#b04a6c"/><stop offset=".8" stop-color="#cf5a5c"/><stop offset="1" stop-color="#e0634f"/></linearGradient>
    <linearGradient id="c" x2="0" y2="1"><stop stop-color="#b8b8b8"/><stop offset="1" stop-color="#9a9a9a"/></linearGradient>
  </defs>
  ${nut(584, 198)}${nut(840, 196)}${nut(849, 422)}${nut(593, 425)}
  <polygon points="${outFront} ${outBase}" fill="url(#o)"/>
  <polygon points="${holeBack} ${holeBase}" fill="url(#i)"/>
  <path fill-rule="evenodd" fill="#e2654d" d="M${outTop} ${outFront}zM${holeBack} ${holeFront}z"/>
  <g fill="none" stroke="#fff" stroke-linejoin="round">
    <polyline points="${outTop}" stroke-width="1.700"/><polyline points="${outFront}" stroke="#f0d0d8" stroke-width="1"/>
    <polyline points="414,308 ${outBase} 1029,313" stroke-width="1.700"/>
    <polyline points="${holeBack}" stroke="#e8c8d8" stroke-width="1"/><polyline points="${holeBase}" stroke-width="1.700"/><polyline points="${holeFront}" stroke-width="1.500"/>
  </g>
  ${bolt(584, 198)}${bolt(840, 196)}${bolt(461, 313)}${bolt(973, 308)}${bolt(593, 425)}${bolt(849, 422)}
  <g>
    <ellipse cx="1185" cy="246" rx="40" ry="22" fill="none" stroke="#4b525b" stroke-width="9"/>
    <path d="M1170 204h32l2 14-1 32h-34l-1-32z" fill="url(#c)"/><path d="M1168 219h36" stroke="#555" stroke-dasharray="7 3"/>
    <text x="1186" y="238" text-anchor="middle" font-family="Liberation Sans" font-weight="700" font-size="8" fill="#444">LEFT</text>
    <path d="M1182 208v6M1185 208v7M1188 208v6M1181 209h8M1181 213h8" stroke="#444" fill="none"/>
    <g font-family="Liberation Sans" font-weight="700" fill="#c8c8c8" text-anchor="middle"><text transform="translate(1140 243) rotate(90)" font-size="11">N</text><text transform="translate(1231 242) rotate(-90)" font-size="11">S</text><text transform="translate(1182 270) rotate(90)" font-size="13">W</text></g>
  </g>
  <path d="M32 603h42" stroke="#48a048" stroke-width="5"/><path d="M73 604v-36" stroke="#4a78c8" stroke-width="5"/><path d="M73 604v-36" stroke="#88aae8" stroke-width="1"/>
  <path d="M71 556h10l-10 11h10" fill="none" stroke="#2a50b0" stroke-width="1.500"/><path d="M75 572l5 7M80 571l-6 9" stroke="#a02c3c"/><path d="M32 593l3 3 3-5M35 596l-2 6" fill="none" stroke="#389038"/>
</svg>
<div class="head"><button class="vl">[−][Custom View][Conceptual]</button><div><icon-button icon="min" size="10"></icon-button><icon-button icon="restore" size="10"></icon-button><icon-button icon="close" size="10"></icon-button></div></div>
<button class="wcs">WCS<svg width="7" height="5"><path d="M0 0h7L3 4z" fill="#bcc2ca"/></svg></button>
<layer-palette></layer-palette>`);

/* ---------- layer properties palette ---------- */
const LAYERS = [['0', 'whi...', '#fff', 'Color_7'], ['brida', 'red', '#f00', 'Color_1'], ['tornillo', 'cyan', '#00e8f0', 'Color_4'], ['tuerca', '30', '#d86c00', 'Color_30']];
define('layer-palette', `<style>
  :host{display:flex;box-sizing:border-box;width:699px;height:294px;background:#5d5f5f;opacity:.59;border:1px solid #3c3c3c;color:#fff;box-shadow:inset -3px -2px #454545}
  .side{flex:none;width:17px;display:flex;flex-direction:column;align-items:center;gap:6px;padding:3px 0 2px;border-right:1px solid #3c3c3c;box-sizing:border-box}
  .side icon-button{width:14px;height:10px}
  .side span{flex:1;writing-mode:vertical-rl;transform:rotate(180deg);text-align:left;color:#ccc}
  .body{flex:1;min-width:0;display:flex;flex-direction:column;padding:7px 4px 0 1px}
  .top{display:flex;justify-content:space-between}
  .cur{flex:1;height:17px;border-top:2px solid #ddd;padding:3px 0 0 4px;box-sizing:border-box;line-height:14px}
  .find{display:flex;align-items:center;width:110px;height:14px;background:#505050}
  .find input{all:unset;flex:1;min-width:0;padding-left:4px;font-size:9px;line-height:14px}
  .find input::placeholder{color:#c8c8c8}
  .bar{display:flex;height:24px;align-items:center}
  .bar i{width:2px;height:15px;background:#ddd;margin:0 3px 0 4px}
  .main{flex:1;display:flex;min-height:0;gap:2px}
  .filters{flex:none;width:170px;box-sizing:border-box;display:flex;flex-direction:column;border-right:1px solid #464646;padding-bottom:5px}
  h3{margin:0;font:inherit;height:20px;line-height:20px;border-top:1px solid #505050;border-bottom:1px solid #505050;padding:0 6px 0 5px;display:flex;justify-content:space-between;box-sizing:border-box}
  h3 b,.inv b{font:14px/14px "Noto Sans",sans-serif}
  .tree{flex:1;padding:3px 0 0 7px}
  .n{display:flex;align-items:center;gap:4px;height:14px}
  .n.c{padding-left:29px}
  .box{width:7px;height:7px;border:1px solid #222;display:flex;align-items:center}.box::after{content:"";flex:1;height:1px;background:#ccc;margin:1px}
  .all{background:#ccc;color:#222;padding:0 1px;margin-left:-2px}
  .inv{display:flex;align-items:center;gap:4px;height:22px;padding:0 4px 0 5px;border-top:1px solid #505050}
  .inv label{flex:1}
  .inv input{appearance:none;width:11px;height:11px;margin:0;background:#e8e8e8;border:1px solid #888}
  .grid{flex:1;min-width:0;display:flex;flex-direction:column}
  .tw{flex:1;padding-top:2px;background:linear-gradient(90deg,transparent 83px,#4c4c4c 83px 84px,transparent 84px)}
  table{table-layout:fixed;width:100%;border-collapse:collapse}
  th,td{padding:0;font-weight:400;text-align:left;overflow:hidden;white-space:nowrap;height:14px;line-height:14px}
  th{height:20px;padding-left:4px;border-right:1px solid #4c4c4c}
  th:last-child{border:0}
  td cad-icon{margin-left:5px}
  td.nm,td.lt,td.lw{padding-left:3px}
  .cl{display:flex;align-items:center;gap:3px;height:14px;padding-left:3px}
  .cl u{width:8px;height:8px;border:1px solid #222}
  .wt{display:flex;align-items:center;gap:5px;padding-left:2px}.wt::before{content:"";width:19px;height:1px;background:#fff}
  .dim{color:#aaa;padding-left:3px}
  tr.sel td{background:#999;color:#222}
  tr.sel .dim{color:#c8c8c8}
  tr.sel .wt::before{background:#222}
  .sb{display:flex;height:14px;margin-bottom:5px;background:repeating-conic-gradient(#b8b8b8 0 25%,#888 0 50%) 0 0/2px 2px}
  .sb button{all:unset;width:13px;background:#ccc;display:flex;align-items:center;justify-content:center}
  .sb button::before{content:"";border:4px solid transparent;border-right-color:#000;border-left:0}
  .sb button:last-child::before{border:4px solid transparent;border-left-color:#000;border-right:0}
  .th{width:71%;border:1px solid;border-color:#fff #333 #333 #fff;background:#c4c4c4;box-sizing:border-box;margin-right:auto}
  .stat{border-top:2px solid #ddd;padding:3px 0 0 4px;height:24px;box-sizing:border-box;line-height:14px;margin-right:-1px}
</style>
<div class="side"><icon-button icon="wclose" size="10"></icon-button><icon-button icon="pin" size="8"></icon-button><icon-button icon="gear" size="10"></icon-button><span>LAYER PROPERTIES MANAGER</span><icon-button icon="pal" size="13"></icon-button></div>
<div class="body">
  <div class="top"><div class="cur">Current layer: tuerca</div><div class="find"><input aria-label="Search for layer" placeholder="Search for layer"><cad-icon name="search" size="9"></cad-icon></div></div>
  <div class="bar"><icon-button icon="fold1"></icon-button><icon-button icon="fold2"></icon-button><i></i><icon-button icon="lstate"></icon-button><div style="width:38px"></div><icon-button icon="lnew"></icon-button><icon-button icon="lfrz"></icon-button><icon-button icon="ldel"></icon-button><icon-button icon="lcur"></icon-button><div style="flex:1"></div><icon-button icon="refresh" size="12"></icon-button><icon-button icon="gear" size="12"></icon-button><div style="width:3px"></div></div>
  <div class="main">
    <div class="filters"><h3>Filters<b>«</b></h3>
      <div class="tree"><div class="n"><span class="box"></span><cad-icon name="allf" size="14"></cad-icon><span class="all">All</span></div><div class="n c"><cad-icon name="fold1" size="13"></cad-icon>All Used Layers</div></div>
      <div class="inv"><input type="checkbox" id="inv"><label for="inv">Invert filter</label><b>«</b></div></div>
    <div class="grid"><div class="tw"><table><colgroup>${[20, 63, 21, 35, 26, 40, 54, 59, 45, 46, 22, 19, 54].map(w => `<col style="width:${w}px">`).join('')}</colgroup>
      <thead><tr>${['S...', 'Name', 'O...', 'Fre...', 'L...', 'Color', 'Linetype', 'Lineweight', 'Trans...', 'Plot St...', 'P...', 'N...', 'Description'].map(h => `<th>${h}</th>`).join('')}</tr></thead>
      <tbody>${LAYERS.map(([n, c, hex, p], i) => `<tr${i === 3 ? ' class="sel"' : ''}><td><cad-icon name="${i === 3 ? 'check' : 'lay'}" size="${i === 3 ? 14 : 11}" style="margin-left:${i === 3 ? 1 : 2}px"></cad-icon></td><td class="nm">${n}</td><td><cad-icon name="bulb" size="11"></cad-icon></td><td><cad-icon name="sun" size="12" style="margin-left:10px"></cad-icon></td><td><cad-icon name="lock" size="12" style="margin-left:6px"></cad-icon></td><td><div class="cl"><u style="background:${hex}"></u>${c}</div></td><td class="lt">Continuous</td><td><div class="wt">Default</div></td><td class="nm">0</td><td class="dim">${p}</td><td><cad-icon name="print" size="8"></cad-icon></td><td><cad-icon name="vp" size="11"></cad-icon></td><td></td></tr>`).join('')}</tbody></table></div>
      <div class="sb"><button aria-label="Scroll left"></button><div class="th"></div><button aria-label="Scroll right"></button></div></div>
  </div>
  <div class="stat">All: 4 layers displayed of 4 total layers</div>
</div>`);

/* ---------- command line ---------- */
define('command-line', `<style>
  :host{display:grid;grid-template-columns:18px 1fr;height:46px;box-sizing:border-box;border-top:3px solid #66696b;background:#666;font:10px/12px "Liberation Mono","DejaVu Sans Mono",monospace}
  .grip{display:flex;flex-direction:column;align-items:center;justify-content:space-between;padding:2px 0 1px;background:linear-gradient(90deg,#999,#555)}
  .dots{width:14px;height:4px;background:repeating-conic-gradient(#bbb 0 25%,transparent 0 50%) 0 0/3px 3px}
  .hist{background:#c8c8c8;color:#111;height:24px;border-bottom:1px solid #777;box-sizing:border-box;padding:10px 2px 0;white-space:pre;overflow:hidden}
  .in{background:#fff;display:flex;align-items:center;height:19px;padding-left:5px}
  input{all:unset;flex:1;padding-left:6px;font-style:italic;color:#333}
  input::placeholder{color:#777}
  svg{margin-left:2px}
</style>
<div class="grip"><span class="dots"></span><cad-icon name="wclose" size="10"></cad-icon><cad-icon name="wrench" size="12"></cad-icon></div>
<div><div class="hist">Command: Specify opposite corner or [Fence/WPolygon/CPolygon]:  Specify opposite corner or [Fence/WPolygon/CPolygon]:</div>
<div class="in"><cad-icon name="prompt" size="13"></cad-icon><svg width="5" height="4"><path d="M0 0h5L2 3z" fill="#555"/></svg><input aria-label="Command" placeholder="Type a command"></div></div>`);

/* ---------- layout tabs and status bar ---------- */
define('status-bar', `<style>
  :host{display:flex;justify-content:space-between;height:22px;background:#3a3a3a}
  .tabs{display:flex;padding-left:9px}
  button{all:unset;box-sizing:border-box}
  .tabs button{width:54px;height:15px;line-height:15px;padding-left:10px;margin-right:-1px;background:#585858;color:#ddd;clip-path:polygon(0 0,100% 0,90% 90%,87% 100%,12% 100%,8% 90%)}
  .tabs .on{background:#858585;font-weight:700;color:#fff;width:49px;padding-left:9px}
  .tabs .add{width:24px;padding:0;display:flex;align-items:center;justify-content:center}
  .tray{display:flex;background:#4d4d4d;padding-top:1px}
  .g{display:flex;align-items:center;border-left:1px solid #7b7b7b;box-shadow:inset 1px 0 #383838;padding:0 1px 0 2px}
  .g button{padding:0 2px 0 2px;font-size:10px;color:#fff}
  .g icon-button{width:20px}
  .g .c{width:11px}
</style>
<div class="tabs"><button class="on">Model</button><button>Layout1</button><button>Layout2</button><button class="add" aria-label="New layout"><cad-icon name="plus" size="7"></cad-icon></button></div>
<div class="tray">${[['MODEL'], ['grid', 'snap', 'caret'], ['ortho', 'polar', 'caret', 'iso', 'caret'], ['otrack', 'osnap', 'caret'], ['ann1', 'ann2', 'ann3', '1:1', 'caret'], ['gear', 'caret'], ['plus'], ['units'], ['hw'], ['full', 'burger']].map(g => `<div class="g">${g.map(i => /^[M1]/.test(i) ? `<button>${i}</button>` : `<icon-button icon="${i}" size="${i === 'caret' ? 6 : i === 'hw' ? 16 : i === 'gear' || i === 'plus' ? 12 : 13}"${i === 'caret' ? ' class="c"' : ''}></icon-button>`).join('')}</div>`).join('')}</div>`);

/* ---------- application frame ---------- */
define('cad-app', `<style>
  :host{display:flex;flex-direction:column;min-height:100vh;box-sizing:border-box;margin:0 32px;padding-right:4px;background:linear-gradient(#333638 0 32px,#999 32px,#444 52px,#2e3234 53px 490px,#999 490px 493px,#2e3234 493px);border-bottom:4px solid #fff}
</style>
<cad-header></cad-header><cad-ribbon></cad-ribbon><file-tabs></file-tabs><model-view></model-view><command-line></command-line><status-bar></status-bar>`);
</script>
</body>
</html>
